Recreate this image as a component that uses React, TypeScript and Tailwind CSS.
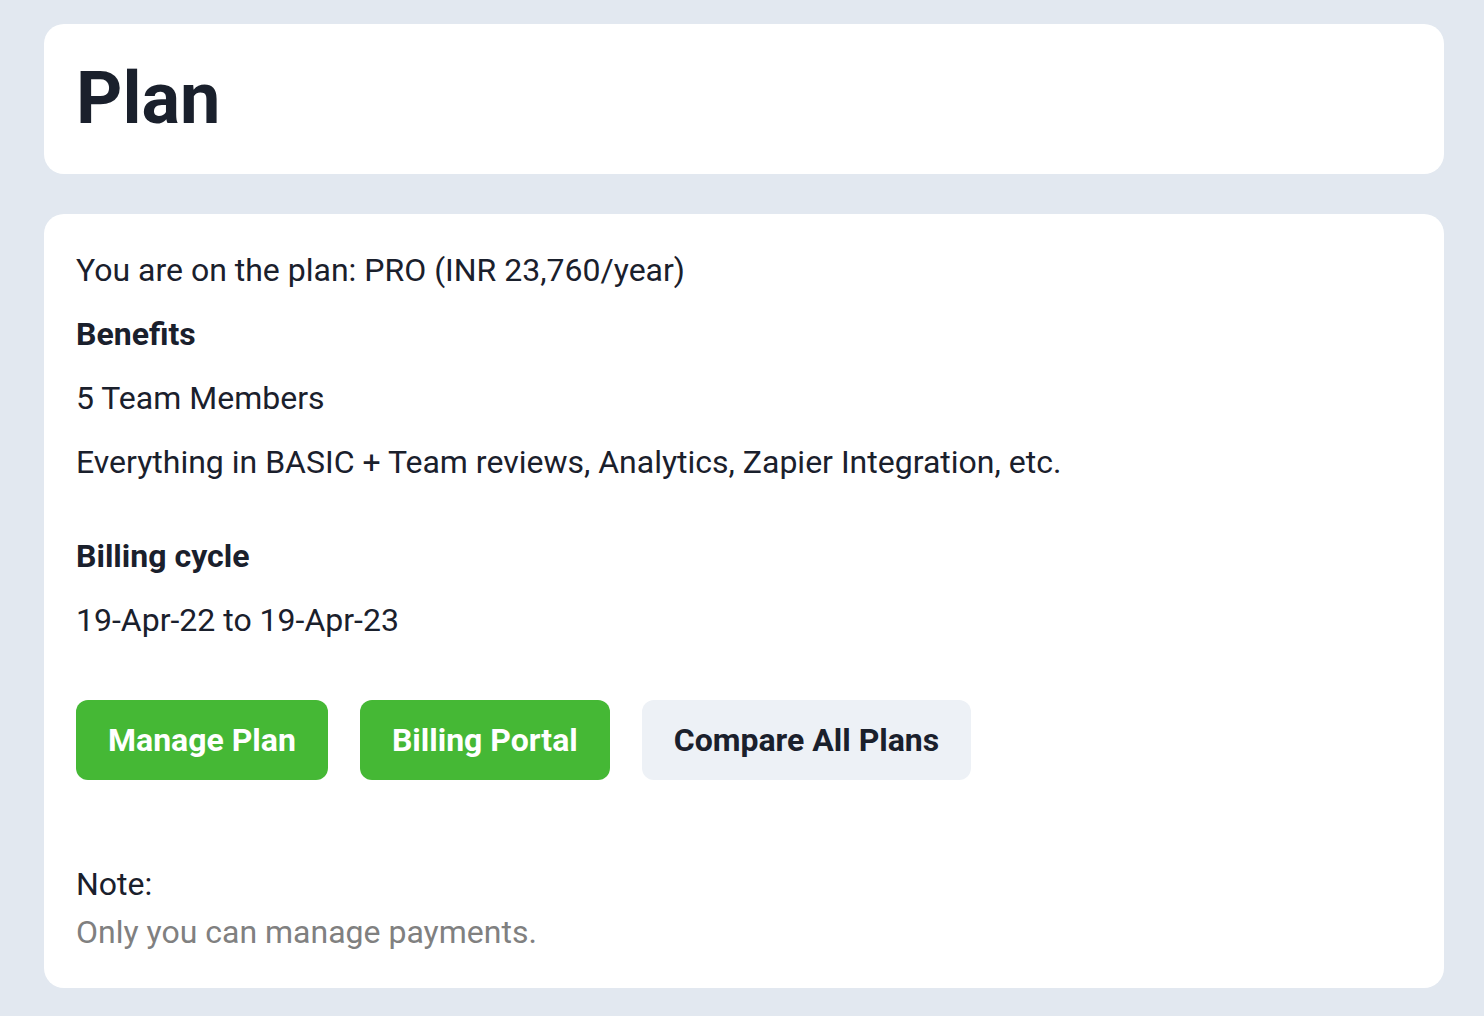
export default function App() {
  return (
    <div
      className="min-h-screen bg-[#e2e8f0] pl-[44px] pr-[40px] pt-[24px] pb-[28px] text-[#1a202c]"
      style={{ fontFamily: 'Roboto, "Noto Sans", sans-serif' }}
    >
      <div className="flex flex-col gap-[40px]">
        <div className="rounded-[20px] bg-white px-[32px] py-[32px]">
          <h1 className="text-[72px] font-bold leading-[86px]">Plan</h1>
        </div>
        <div className="rounded-[20px] bg-white px-[32px] py-[32px]">
          <div className="flex flex-col gap-[16px]">
            <p className="text-[32px] leading-[48px]">You are on the plan: PRO (INR 23,760/year)</p>
            <p className="text-[32px] font-bold leading-[48px]">Benefits</p>
            <p className="text-[32px] leading-[48px]">5 Team Members</p>
            <p className="text-[32px] leading-[48px]">
              Everything in BASIC + Team reviews, Analytics, Zapier Integration, etc.
            </p>
          </div>
          <div className="mt-[46px] flex flex-col gap-[16px]">
            <p className="text-[32px] font-bold leading-[48px]">Billing cycle</p>
            <p className="text-[32px] leading-[48px]">19-Apr-22 to 19-Apr-23</p>
          </div>
          <div className="mt-[56px] flex gap-[32px]">
            <button className="rounded-[12px] bg-[#45b835] px-[32px] py-[16px] text-[32px] font-bold leading-[48px] text-white">
              Manage Plan
            </button>
            <button className="rounded-[12px] bg-[#45b835] px-[32px] py-[16px] text-[32px] font-bold leading-[48px] text-white">
              Billing Portal
            </button>
            <button className="rounded-[12px] bg-[#edf1f6] px-[32px] py-[16px] text-[32px] font-bold leading-[48px] text-[#1a202c]">
              Compare All Plans
            </button>
          </div>
          <div className="mt-[80px]">
            <p className="text-[32px] leading-[48px]">Note:</p>
            <p className="text-[32px] leading-[48px] text-[#808080]">Only you can manage payments.</p>
          </div>
        </div>
      </div>
    </div>
  );
}
